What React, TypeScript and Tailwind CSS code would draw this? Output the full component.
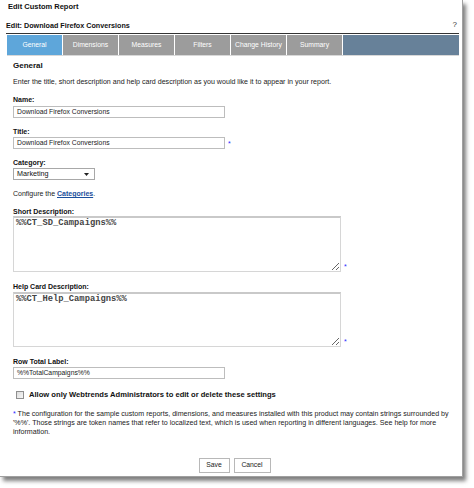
import type { ReactNode } from "react";

const tabs = ["General", "Dimensions", "Measures", "Filters", "Change History", "Summary"];

function Label({ children, className = "" }: { children: ReactNode; className?: string }) {
  return <div className={`text-[7px] font-bold leading-[8px] text-[#111] ${className}`}>{children}</div>;
}

function Req({ className = "" }: { className?: string }) {
  return <span className={`text-[7px] leading-none text-[#2a2aff] ${className}`}>*</span>;
}

function TextBox({ value, className = "" }: { value: string; className?: string }) {
  return (
    <div
      className={`flex h-[12px] w-[212px] items-center border border-[#bdbdbd] bg-white pl-[3px] text-[6.8px] text-[#222] ${className}`}
    >
      {value}
    </div>
  );
}

function Area({ value, h }: { value: string; h: string }) {
  return (
    <textarea
      readOnly
      defaultValue={value}
      className={`${h} w-[328px] resize border border-[#d6d6d6] border-t-2 border-t-[#c9c9c9] bg-white px-[2px] py-0 font-['Liberation_Mono','Courier_New',monospace] text-[8.8px] font-semibold leading-[11px] text-[#444] outline-none`}
    />
  );
}

export default function App() {
  return (
    <div className="h-[488px] w-[474px] bg-white font-['Liberation_Sans',Arial,sans-serif] text-[#222]">
      <div className="flex h-[477px] w-[463px] flex-col border-r border-b border-[#a0a0a0] bg-white shadow-[3px_4px_4px_rgba(0,0,0,0.5)]">
        <div className="pl-[8px] pt-[1px] text-[7.5px] font-bold leading-[11px] text-[#111]">Edit Custom Report</div>

        <div className="ml-[6px] mt-[9px] w-[453px]">
          <div className="flex h-[13px] items-start justify-between border-b border-[#333]">
            <span className="text-[7.2px] font-bold leading-[10px] text-[#111]">Edit: Download Firefox Conversions</span>
            <span className="mr-[2px] text-[8px] leading-[8px] text-[#333]">?</span>
          </div>
          <div className="ml-[1px] mt-[1px] flex h-[21px] border-b border-[#d8d8d8]">
            {tabs.map((t, i) => (
              <div
                key={t}
                className={`flex w-[56px] items-center justify-center border-r border-white text-[6.8px] text-white ${
                  i === 0 ? "bg-[#5ea6da]" : "bg-[#9c9c9c]"
                }`}
              >
                {t}
              </div>
            ))}
            <div className="flex-1 bg-[#678199]" />
          </div>
        </div>

        <div className="pl-[13px]">
          <div className="mt-[5px] text-[8px] font-bold leading-[10px] text-[#111]">General</div>
          <p className="mt-[7px] text-[7.1px] leading-[9px] text-[#222]">
            Enter the title, short description and help card description as you would like it to appear in your report.
          </p>

          <Label className="mt-[9px]">Name:</Label>
          <TextBox value="Download Firefox Conversions" className="mt-[2px]" />

          <Label className="mt-[10px]">Title:</Label>
          <div className="mt-[1px] flex items-center gap-[3px]">
            <TextBox value="Download Firefox Conversions" />
            <Req />
          </div>

          <Label className="mt-[10px]">Category:</Label>
          <div className="mt-[1px] flex h-[12px] w-[82px] items-center justify-between border border-[#a8a8a8] bg-white pl-[3px] pr-[5px] text-[7.2px] text-[#111]">
            Marketing
            <svg width="5" height="3" viewBox="0 0 5 3">
              <path d="M0 0h5L2.5 3z" fill="#222" />
            </svg>
          </div>

          <p className="mt-[9px] text-[7px] leading-[9px]">
            Configure the <span className="font-bold text-[#1b4f9c] underline">Categories</span>.
          </p>

          <Label className="mt-[10px]">Short Description:</Label>
          <div className="flex items-end gap-[3px]">
            <Area value="%%CT_SD_Campaigns%%" h="h-[56px]" />
            <Req className="mb-[2px]" />
          </div>

          <Label className="mt-[11px]">Help Card Description:</Label>
          <div className="mt-[1px] flex items-end gap-[3px]">
            <Area value="%%CT_Help_Campaigns%%" h="h-[55px]" />
            <Req className="mb-[2px]" />
          </div>

          <Label className="mt-[11px]">Row Total Label:</Label>
          <TextBox value="%%TotalCampaigns%%" className="mt-[1px]" />

          <div className="mt-[11px] flex h-[10px] items-center gap-[5px] pl-[3px]">
            <div className="h-[8px] w-[8px] border border-[#8f8f8f] bg-gradient-to-br from-[#dcdcdc] to-[#f7f7f7]" />
            <span className="text-[7.6px] font-bold text-[#111]">
              Allow only Webtrends Administrators to edit or delete these settings
            </span>
          </div>

          <p className="mt-[10px] text-[7.1px] leading-[9px] text-[#222]">
            <span className="text-[#2a2aff]">*</span> The configuration for the sample custom reports, dimensions, and
            measures installed with this product may contain strings surrounded by
            <br />
            '%%'. Those strings are token names that refer to localized text, which is used when reporting in different
            languages. See help for more
            <br />
            information.
          </p>
        </div>

        <div className="mt-[21px] flex justify-center gap-[4px] pl-[7px]">
          <button className="h-[15px] w-[31px] border border-[#b8b8b8] bg-white text-[6.8px] text-[#222]">Save</button>
          <button className="h-[15px] w-[37px] border border-[#b8b8b8] bg-white text-[6.8px] text-[#222]">Cancel</button>
        </div>
      </div>
    </div>
  );
}
